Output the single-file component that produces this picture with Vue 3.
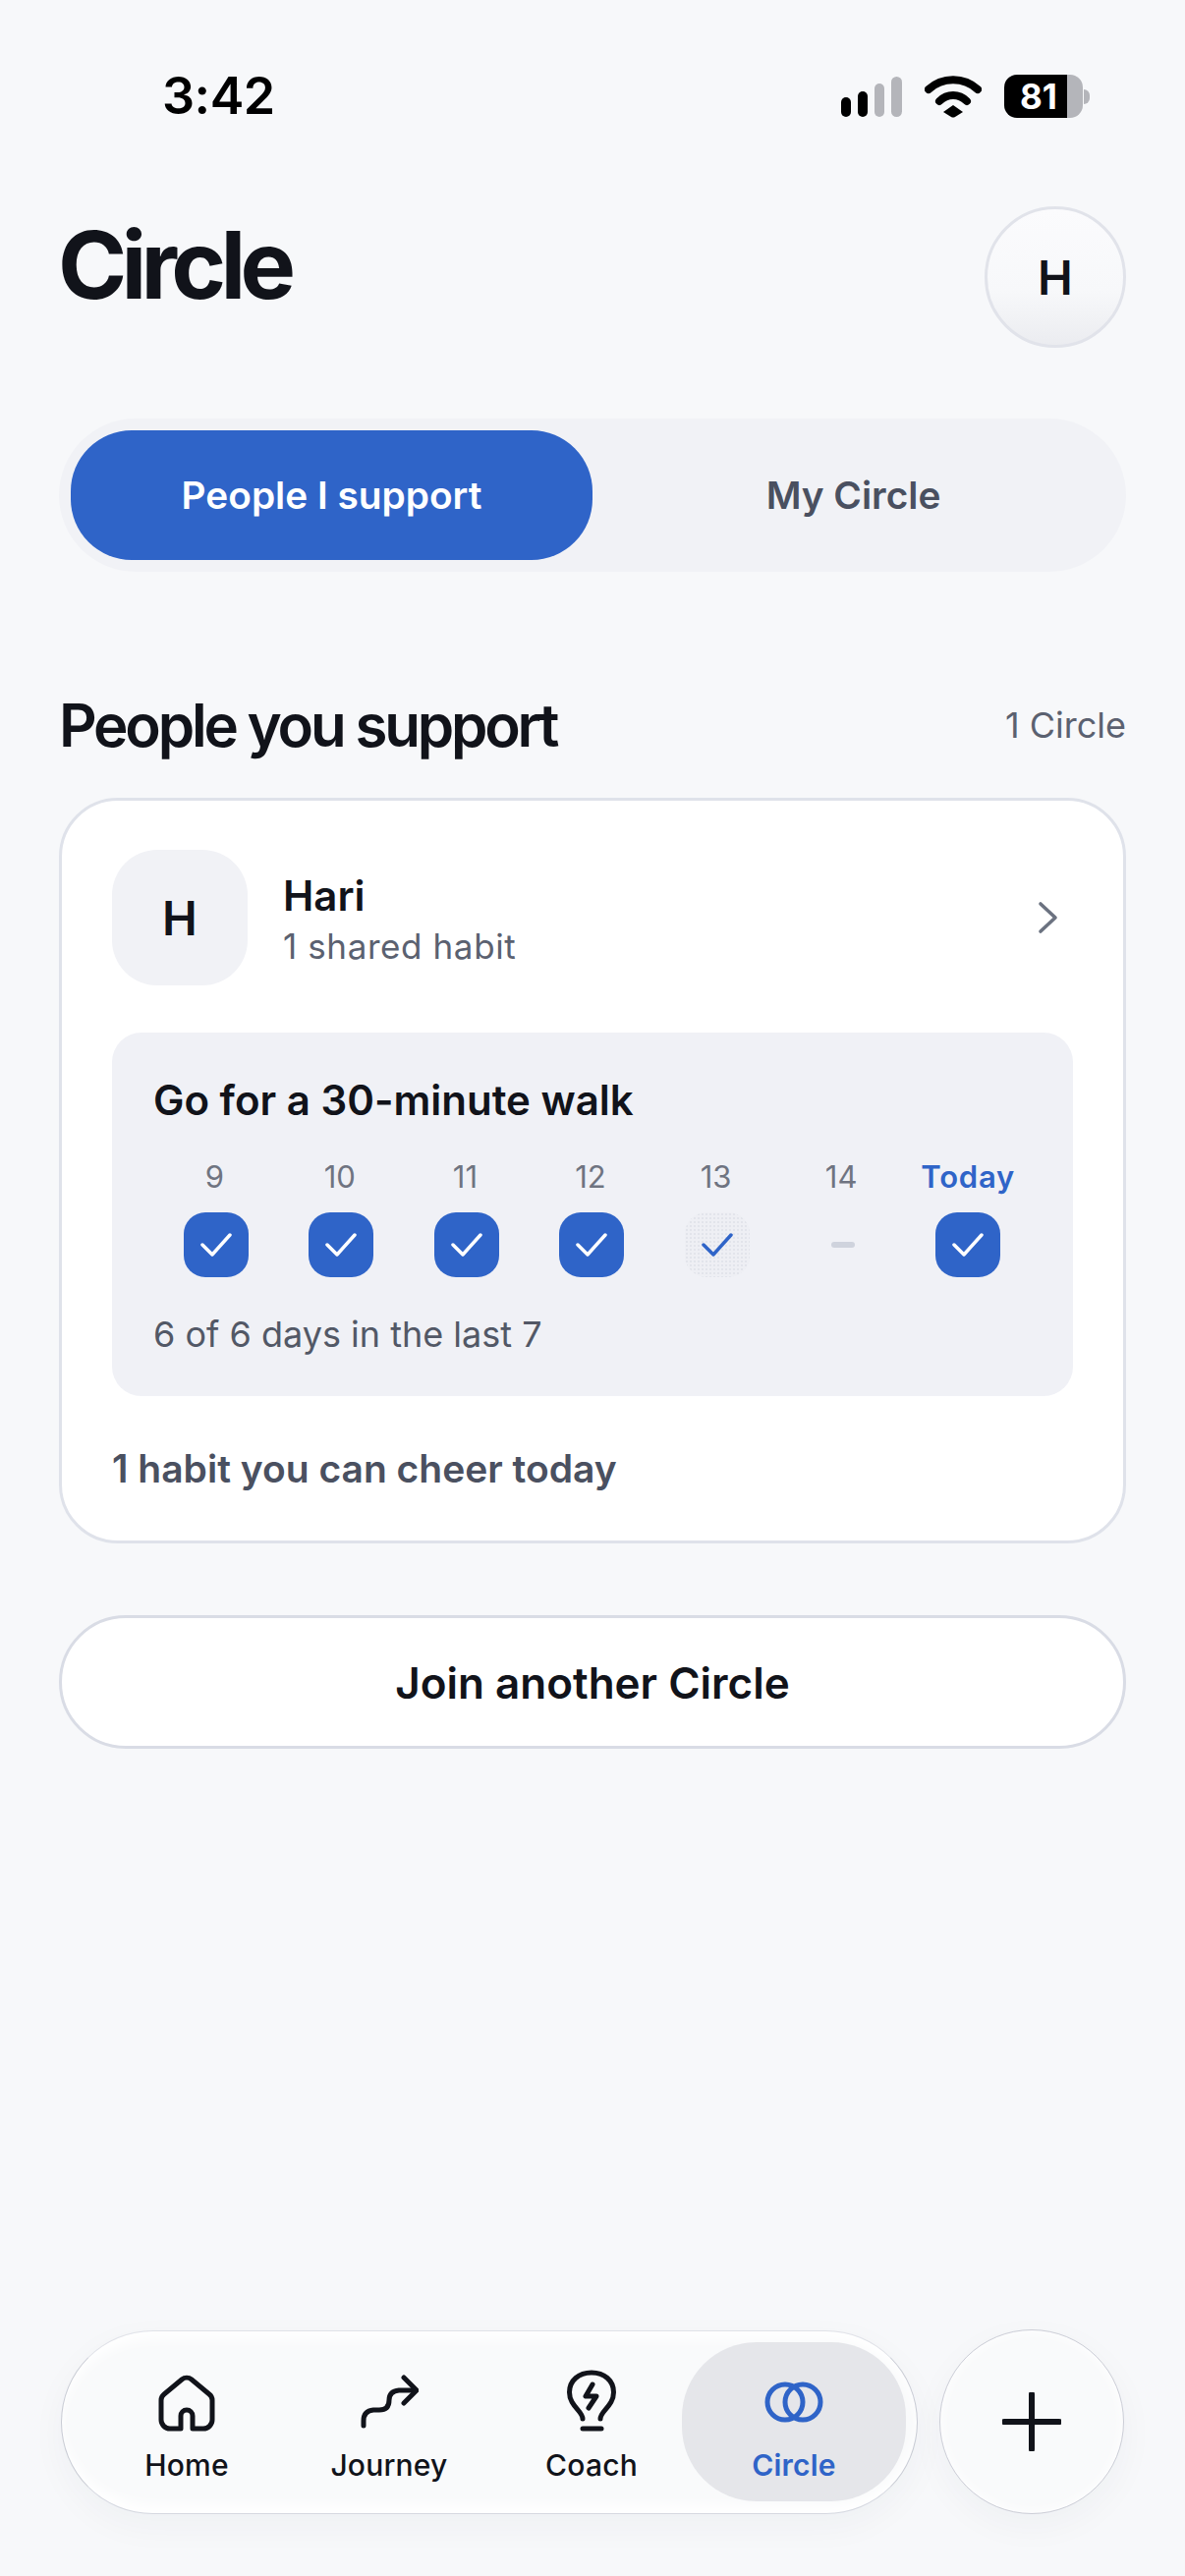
<script setup>
import { ref } from 'vue';

const days = ref([
  { label: '9', state: 'done' },
  { label: '10', state: 'done' },
  { label: '11', state: 'done' },
  { label: '12', state: 'done' },
  { label: '13', state: 'soft' },
  { label: '14', state: 'none' },
  { label: 'Today', state: 'done', today: true },
]);
</script>

<template>
  <div class="screen">
    <div class="status-bar">
      <span class="time">3:42</span>
      <div class="status-icons">
        <svg class="signal" width="62" height="41" viewBox="0 0 62 41">
          <rect x="0" y="21" width="10" height="20" rx="5" fill="#000" />
          <rect x="17" y="15" width="10" height="26" rx="5" fill="#000" />
          <rect x="34" y="7" width="10" height="34" rx="5" fill="#b4b5ba" />
          <rect x="51" y="0" width="11" height="41" rx="5.5" fill="#b4b5ba" />
        </svg>
        <svg class="wifi" width="58" height="44" viewBox="0 0 58 44">
          <path d="M4 15 C18 2 40 2 54 15" fill="none" stroke="#000" stroke-width="8" stroke-linecap="round" />
          <path d="M15 27 C23 19 35 19 43 27" fill="none" stroke="#000" stroke-width="8" stroke-linecap="round" />
          <path d="M29 31 L39 38 L31 43 Q29 44 27 43 L19 38 Z" fill="#000" />
        </svg>
        <div class="battery">
          <div class="battery-body"><span>81</span></div>
          <div class="battery-nub"></div>
        </div>
      </div>
    </div>

    <header class="page-header">
      <h1 class="page-title">Circle</h1>
      <div class="profile-btn">H</div>
    </header>

    <div class="segment">
      <div class="segment-item segment-item--active">People I support</div>
      <div class="segment-item">My Circle</div>
    </div>

    <div class="section-head">
      <h2 class="section-title">People you support</h2>
      <span class="section-count">1 Circle</span>
    </div>

    <section class="card">
      <div class="person">
        <div class="person-avatar">H</div>
        <div class="person-info">
          <p class="person-name">Hari</p>
          <p class="person-sub">1 shared habit</p>
        </div>
        <svg class="chevron" width="22" height="34" viewBox="0 0 22 34">
          <path d="M3 3 L18 17 L3 31" fill="none" stroke="#6b7280" stroke-width="3.6" stroke-linecap="round" stroke-linejoin="round" />
        </svg>
      </div>

      <div class="habit">
        <p class="habit-title">Go for a 30-minute walk</p>
        <div class="days">
          <div v-for="day in days" :key="day.label" class="day">
            <span :class="['day-label', { 'day-label--today': day.today }]">{{ day.label }}</span>
            <div :class="['day-box', 'day-box--' + day.state]">
              <svg v-if="day.state !== 'none'" width="66" height="66" viewBox="0 0 66 66">
                <path d="M19 33 L29 43 L47 23" fill="none" stroke-width="3.5" stroke-linecap="round" stroke-linejoin="round" />
              </svg>
              <div v-else class="day-dash"></div>
            </div>
          </div>
        </div>
        <p class="habit-foot">6 of 6 days in the last 7</p>
      </div>

      <p class="cheer">1 habit you can cheer today</p>
    </section>

    <button class="join-btn">Join another Circle</button>

    <div class="spacer"></div>

    <div class="bottom">
      <nav class="nav">
        <div class="nav-item">
          <svg width="60" height="60" viewBox="0 0 60 60">
            <path d="M24 56 H13 a9 9 0 0 1 -9 -9 V27 a8 8 0 0 1 3 -6 L25 6 a8 8 0 0 1 10 0 L53 21 a8 8 0 0 1 3 6 V47 a9 9 0 0 1 -9 9 H36 V43 a6 6 0 0 0 -12 0 Z" fill="none" stroke="#11131a" stroke-width="5" stroke-linejoin="round" />
          </svg>
          <span class="nav-label">Home</span>
        </div>
        <div class="nav-item">
          <svg width="60" height="60" viewBox="0 3 60 60">
            <path d="M4 56 V51 Q4 41 14 40 H20 Q30 40 30 30 Q30 21 40 20 H56" fill="none" stroke="#11131a" stroke-width="5" stroke-linecap="round" stroke-linejoin="round" />
            <path d="M45 7 L58 20 L45 33" fill="none" stroke="#11131a" stroke-width="5" stroke-linecap="round" stroke-linejoin="round" />
          </svg>
          <span class="nav-label">Journey</span>
        </div>
        <div class="nav-item">
          <svg class="icon-tall" width="60" height="60" viewBox="31 16 60 60">
            <path d="M52 62 C52 54 38.5 49 38.5 35 C38.5 23 48 15 61 15 C74 15 83.5 23 83.5 35 C83.5 49 70 54 70 62" fill="none" stroke="#11131a" stroke-width="5" stroke-linecap="round" />
            <path d="M52 72 H71" fill="none" stroke="#11131a" stroke-width="5" stroke-linecap="round" />
            <path d="M62 27 L55 39 H66 L58 51" fill="none" stroke="#11131a" stroke-width="5" stroke-linecap="round" stroke-linejoin="round" />
          </svg>
          <span class="nav-label">Coach</span>
        </div>
        <div class="nav-item nav-item--active">
          <svg width="60" height="60" viewBox="0 0 60 60">
            <circle cx="21" cy="29" r="18" fill="none" stroke="#2f64c8" stroke-width="5" />
            <circle cx="39" cy="29" r="18" fill="none" stroke="#2f64c8" stroke-width="5" />
          </svg>
          <span class="nav-label">Circle</span>
        </div>
      </nav>
      <button class="plus-btn">
        <svg width="60" height="60" viewBox="0 0 60 60">
          <path d="M30 2 V58 M2 30 H58" fill="none" stroke="#11131a" stroke-width="6" stroke-linecap="round" />
        </svg>
      </button>
    </div>
  </div>
</template>

<style scoped>
.screen {
  width: 1206px;
  height: 2622px;
  box-sizing: border-box;
  padding: 0 60px 63px;
  display: flex;
  flex-direction: column;
  background: #f7f8fa;
  color: #11131a;
  font-family: Inter, "Liberation Sans", sans-serif;
}

p, h1, h2 {
  margin: 0;
}

.status-bar {
  display: flex;
  justify-content: space-between;
  align-items: center;
  height: 44px;
  margin-top: 76px;
  padding-left: 105px;
  padding-right: 37px;
}

.time {
  font-size: 52px;
  font-weight: 600;
  color: #000;
  letter-spacing: -0.5px;
  line-height: 44px;
}

.status-icons {
  display: flex;
  align-items: center;
  gap: 23px;
}

.battery {
  display: flex;
  align-items: center;
  gap: 1px;
}

.battery-body {
  width: 80px;
  height: 44px;
  box-sizing: border-box;
  padding-left: 16px;
  border-radius: 13px;
  background: linear-gradient(90deg, #000 80%, #b4b5ba 80%);
  color: #fff;
  font-size: 35px;
  font-weight: 700;
  line-height: 44px;
}

.battery-nub {
  width: 6px;
  height: 15px;
  border-radius: 0 8px 8px 0;
  background: #b4b5ba;
}

.page-header {
  display: flex;
  justify-content: space-between;
  align-items: center;
  margin-top: 90px;
  height: 144px;
}

.page-title {
  font-size: 95px;
  font-weight: 700;
  letter-spacing: -5.7px;
  line-height: 110px;
  margin-top: -25px;
  margin-left: -1px;
}

.profile-btn {
  width: 144px;
  height: 144px;
  box-sizing: border-box;
  border: 3px solid #e1e3ea;
  border-radius: 50%;
  display: flex;
  align-items: center;
  justify-content: center;
  background: linear-gradient(180deg, #fbfbfd 0%, #f7f8fa 60%, #ebecf0 100%);
  font-size: 48px;
  font-weight: 600;
}

.segment {
  display: flex;
  margin-top: 72px;
  height: 156px;
  box-sizing: border-box;
  padding: 12px;
  border-radius: 78px;
  background: #f1f2f6;
}

.segment-item {
  flex: 1;
  box-sizing: border-box;
  padding-bottom: 2px;
  border-radius: 62px;
  display: flex;
  align-items: center;
  justify-content: center;
  font-size: 38.8px;
  font-weight: 600;
  color: #4a5060;
}

.segment-item--active {
  flex: none;
  width: 531px;
  background: #2f64c8;
  color: #fff;
}

.section-head {
  display: flex;
  justify-content: space-between;
  align-items: center;
  margin-top: 120px;
  margin-bottom: 38px;
  height: 72px;
}

.section-title {
  font-size: 60px;
  font-weight: 600;
  letter-spacing: -3.2px;
  line-height: 72px;
}

.section-count {
  font-size: 36px;
  color: #5b6170;
}

.card {
  box-sizing: border-box;
  height: 759px;
  padding: 50px 51px 0;
  background: #fff;
  border: 3px solid #dfe2ea;
  border-radius: 60px;
}

.person {
  display: flex;
  align-items: center;
  height: 138px;
}

.person-avatar {
  width: 138px;
  height: 138px;
  border-radius: 46px;
  background: #f1f2f6;
  display: flex;
  align-items: center;
  justify-content: center;
  font-size: 48px;
  font-weight: 600;
}

.person-info {
  flex: 1;
  margin-left: 36px;
  margin-top: 3px;
}

.person-name {
  font-size: 42px;
  font-weight: 600;
  line-height: 52px;
}

.person-sub {
  margin-top: 2px;
  font-size: 35px;
  letter-spacing: 0.6px;
  line-height: 46px;
  color: #5b6170;
}

.chevron {
  margin-right: 14px;
}

.habit {
  box-sizing: border-box;
  height: 370px;
  margin-top: 48px;
  padding: 42px 43px 0 42px;
  border-radius: 30px;
  background: #f0f1f6;
}

.habit-title {
  font-size: 42px;
  font-weight: 600;
  line-height: 54px;
}

.days {
  display: grid;
  grid-template-columns: repeat(7, 1fr);
  margin-top: 31px;
}

.day {
  display: flex;
  flex-direction: column;
  align-items: center;
  gap: 16px;
}

.day-label {
  font-size: 31px;
  line-height: 40px;
  color: #6f7481;
  white-space: nowrap;
  margin-left: -3px;
}

.day-label--today {
  margin-left: 0;
  font-weight: 600;
  color: #2f64c8;
  letter-spacing: 0.8px;
}

.day-box {
  width: 66px;
  height: 66px;
  border-radius: 22px;
  display: flex;
  align-items: center;
  justify-content: center;
}

.day-box--done {
  background: #2f64c8;
  stroke: #fff;
}

.day-box--soft {
  background-color: #eeeff4;
  background-image: radial-gradient(#e2e4eb 0.8px, transparent 1px);
  background-size: 4px 4px;
  stroke: #2f64c8;
}

.day-dash {
  width: 24px;
  height: 6px;
  border-radius: 3px;
  background: #cfd3dd;
}

.habit-foot {
  margin-top: 34px;
  font-size: 36px;
  line-height: 48px;
  color: #525866;
}

.cheer {
  margin-top: 49px;
  font-size: 39px;
  font-weight: 600;
  line-height: 50px;
  color: #4a5060;
}

.join-btn {
  height: 136px;
  margin-top: 73px;
  padding-top: 3px;
  border: 3px solid #d9dce5;
  border-radius: 68px;
  background: #fff;
  font-family: inherit;
  font-size: 44px;
  font-weight: 600;
  color: #11131a;
}

.spacer {
  flex: 1;
}

.bottom {
  display: flex;
  align-items: center;
  gap: 22px;
  margin-left: 2px;
}

.nav {
  display: flex;
  align-items: center;
  width: 872px;
  height: 187px;
  box-sizing: border-box;
  padding: 0 24px;
  border: 1.5px solid;
  border-color: #e0e2e8 #c8cbd4 #d5d8e0;
  border-radius: 94px;
  background: #f9fafb;
  box-shadow: inset 0 12px 14px -4px #fff, inset 0 -12px 14px -4px #fff, 0 12px 36px rgba(30, 40, 70, 0.04);
}

.nav-item {
  width: 206px;
  flex: none;
  box-sizing: border-box;
  padding-top: 14px;
  display: flex;
  flex-direction: column;
  align-items: center;
}

.icon-tall {
  overflow: visible;
}

.nav-item--active {
  width: 228px;
  height: 162px;
  margin: 0 -11px;
  justify-content: center;
  border-radius: 76px;
  background: #e5e6ea;
  color: #2f64c8;
}

.nav-label {
  margin-top: 13px;
  font-size: 30px;
  font-weight: 500;
  letter-spacing: 0.2px;
  line-height: 40px;
}

.nav-item--active .nav-label {
  font-weight: 600;
}

.plus-btn {
  width: 188px;
  height: 188px;
  padding: 0;
  border: 1.5px solid #ccced7;
  border-radius: 50%;
  background: #f9fafb;
  box-shadow: inset 0 0 14px #fff, 0 12px 36px rgba(30, 40, 70, 0.04);
  display: flex;
  align-items: center;
  justify-content: center;
}
</style>
